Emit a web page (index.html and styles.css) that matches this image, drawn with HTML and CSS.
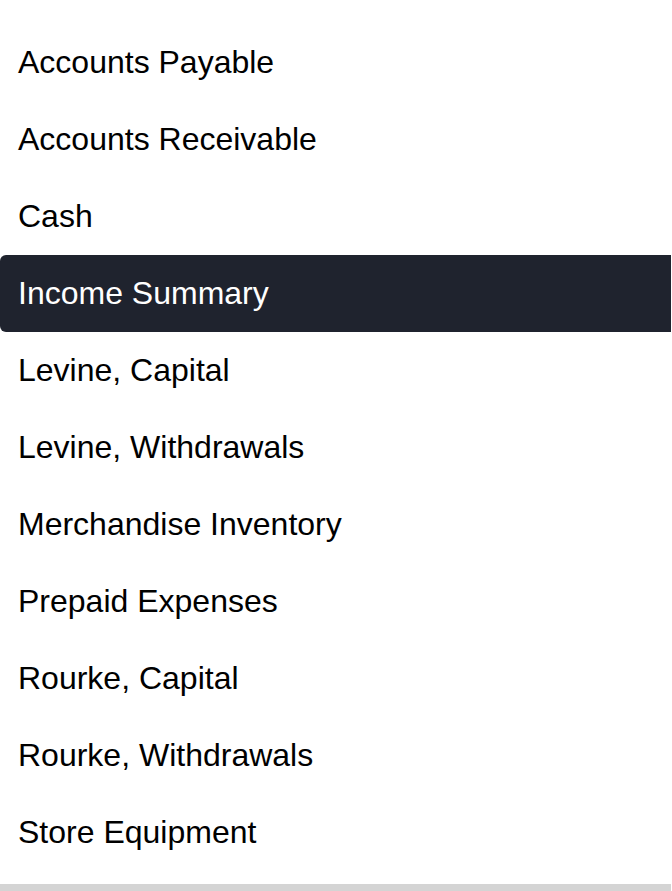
FILE: index.html
```html
<!DOCTYPE html>
<html lang="en">
<head>
<meta charset="utf-8">
<title>Accounts</title>
<link rel="stylesheet" href="styles.css">
</head>
<body>
<div class="panel">
  <ul class="list">
    <li class="item">Accounts Payable</li>
    <li class="item">Accounts Receivable</li>
    <li class="item">Cash</li>
    <li class="item item--active">Income Summary</li>
    <li class="item">Levine, Capital</li>
    <li class="item">Levine, Withdrawals</li>
    <li class="item">Merchandise Inventory</li>
    <li class="item">Prepaid Expenses</li>
    <li class="item">Rourke, Capital</li>
    <li class="item">Rourke, Withdrawals</li>
    <li class="item">Store Equipment</li>
  </ul>
  <div class="scrollbar"></div>
</div>
</body>
</html>
```
FILE: styles.css
```css
html, body {
  margin: 0;
  padding: 0;
  background: #ffffff;
}
body {
  font-family: "Liberation Sans", Arial, sans-serif;
  overflow: hidden;
}
.panel {
  width: 671px;
  height: 891px;
  display: flex;
  flex-direction: column;
}
.list {
  list-style: none;
  margin: 0;
  padding: 24px 0 13px 0;
  display: flex;
  flex-direction: column;
}
.item {
  height: 77px;
  display: flex;
  align-items: center;
  padding-left: 18px;
  font-size: 32px;
  color: #000000;
  border-radius: 6px 0 0 6px;
}
.item--active {
  background: #1f232e;
  color: #ffffff;
}
.scrollbar {
  height: 7px;
  background: #d4d4d4;
}
```
